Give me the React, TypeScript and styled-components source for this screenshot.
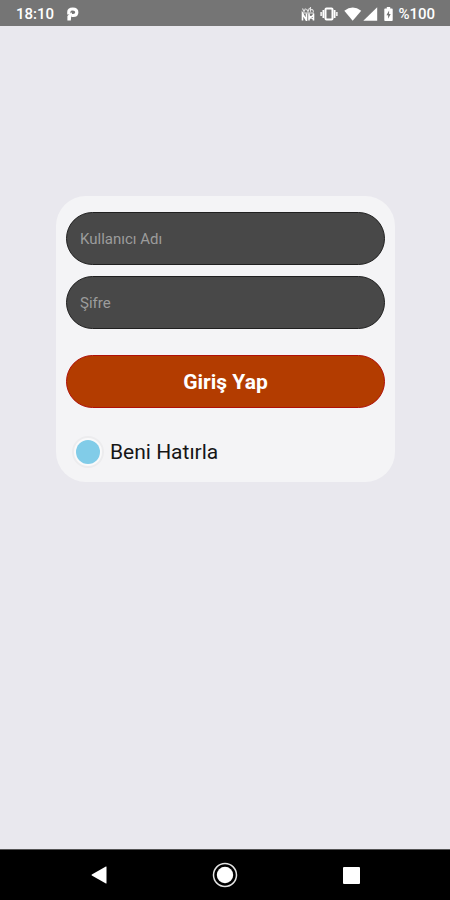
import React from "react";
import styled, { createGlobalStyle } from "styled-components";

const GlobalStyle = createGlobalStyle`
  *, *::before, *::after { box-sizing: border-box; }
  body {
    margin: 0;
    background: #e9e8ee;
    font-family: Roboto, "Liberation Sans", sans-serif;
  }
`;

const Screen = styled.div`
  display: flex;
  flex-direction: column;
  min-height: 100vh;
`;

const StatusBar = styled.header`
  display: flex;
  align-items: center;
  justify-content: space-between;
  height: 26px;
  padding: 2px 15px 0 16px;
  background: #757575;
  color: #fff;
  font-size: 15px;
  line-height: 20px;
  font-weight: 500;
`;

const StatusGroup = styled.div<{ $gap: number }>`
  display: flex;
  align-items: center;
  gap: ${(p) => p.$gap}px;
`;

const Icon = styled.svg`
  display: block;
  flex: none;
`;

const Content = styled.main`
  flex: 1;
  padding: 170px 55px 24px 56px;
`;

const Card = styled.form`
  display: flex;
  flex-direction: column;
  padding: 16px 10px 14px;
  border-radius: 30px;
  background: #f4f4f6;
`;

const Field = styled.input`
  width: 100%;
  height: 53px;
  margin-bottom: 11px;
  padding: 0 13px;
  border: 1px solid #202020;
  border-radius: 27px;
  background: #484848;
  color: #fff;
  font: 400 15px/20px Roboto, "Liberation Sans", sans-serif;
  outline: none;

  &::placeholder {
    color: #9c9c9c;
    opacity: 1;
  }
`;

const SubmitButton = styled.button`
  width: 100%;
  height: 53px;
  margin-top: 15px;
  padding: 0;
  border: 1px solid #b01008;
  border-radius: 27px;
  background: #b33c00;
  color: #fff;
  font: 700 21px/28px Roboto, "Liberation Sans", sans-serif;
  cursor: pointer;
`;

const Remember = styled.label`
  display: flex;
  align-items: center;
  align-self: flex-start;
  gap: 6px;
  margin-top: 28px;
  padding-left: 6px;
  color: #161616;
  font-size: 21px;
  line-height: 32px;
  cursor: pointer;
`;

const Check = styled.input`
  appearance: none;
  flex: none;
  display: grid;
  place-items: center;
  width: 32px;
  height: 32px;
  margin: 0;
  border: 2px solid #ececee;
  border-radius: 50%;
  background: #f9f9fa;

  &::before {
    content: "";
    width: 24px;
    height: 24px;
    border-radius: 50%;
    background: transparent;
  }

  &:checked::before {
    background: #81cce8;
  }
`;

const NavBar = styled.nav`
  display: grid;
  grid-template-columns: repeat(3, 1fr);
  height: 51px;
  padding: 0 8%;
  border-top: 1px solid #555;
  background: #000;
`;

const NavButton = styled.button`
  display: flex;
  align-items: center;
  justify-content: center;
  padding: 0;
  border: 0;
  background: none;
  cursor: pointer;
`;

export default function App() {
  return (
    <Screen>
      <GlobalStyle />
      <StatusBar>
        <StatusGroup $gap={13}>
          <span>18:10</span>
          <Icon width="12" height="14" viewBox="0 0 12 14" fill="none" aria-hidden="true">
            <path d="M1.8 7.5V5C1.8 3 3.4 2 5.8 2C8.3 2 9.8 3.3 9.8 5.2C9.8 7.3 8.3 8.5 6.2 8.5H4.4" stroke="#fff" strokeWidth="3.2" />
            <path d="M.4 9L4.4 5.2L5.4 7.5L4.2 9.6L3.8 13.4H.4Z" fill="#fff" />
          </Icon>
        </StatusGroup>
        <StatusGroup $gap={5}>
          <Icon width="14" height="14" viewBox="0 0 14 14" fill="none" stroke="#fff" aria-hidden="true">
            <path d="M1.5 1.5L3 4.5L4.5 1.5M5.5 2L7 4.5L8.5 1M9.5 0V4.8M9.5 3Q12 1.5 12.5 4.8" strokeWidth="1.1" opacity=".8" />
            <path d="M1.5 13.5V6.5L5.5 13.5V6.5M8 6.5V13.5M12.5 6.5V13.5M8 9L12.5 12M8 12L12.5 8" strokeWidth="1.6" />
            <path d="M1 6H13" strokeWidth="1.2" opacity=".7" />
          </Icon>
          <Icon width="19" height="14" viewBox="0 0 19 14" fill="none" stroke="#fff" aria-hidden="true">
            <rect x="5.5" y="1.5" width="7" height="11" rx="1" strokeWidth="2" />
            <path d="M3.4 3V11M14.6 3V11" strokeWidth="1.8" />
            <path d="M1.2 5V9M16.8 5V9" strokeWidth="1.8" opacity=".85" />
          </Icon>
          <Icon width="35" height="14" viewBox="0 0 35 14" fill="#fff" aria-hidden="true">
            <path d="M.3 3.8Q8.7 -2.6 17.2 3.8L8.7 13.8Z" />
            <path d="M33.2 .3V13.7H19.3Z" />
          </Icon>
          <Icon width="9" height="14" viewBox="0 0 9 14" aria-hidden="true">
            <path d="M2.8 0H6.2V1.5H7.9Q8.7 1.5 8.7 2.3V13.2Q8.7 14 7.9 14H1.1Q.3 14 .3 13.2V2.3Q.3 1.5 1.1 1.5H2.8Z" fill="#fff" />
            <path d="M5.1 3.6L2.4 8.3H4.1V11.8L6.7 7.1H5.1Z" fill="#757575" />
          </Icon>
          <span>%100</span>
        </StatusGroup>
      </StatusBar>
      <Content>
        <Card onSubmit={(e) => e.preventDefault()}>
          <Field type="text" aria-label="Kullanıcı Adı" placeholder="Kullanıcı Adı" />
          <Field type="password" aria-label="Şifre" placeholder="Şifre" />
          <SubmitButton type="submit">Giriş Yap</SubmitButton>
          <Remember htmlFor="remember">
            <Check id="remember" type="checkbox" defaultChecked />
            <span>Beni Hatırla</span>
          </Remember>
        </Card>
      </Content>
      <NavBar>
        <NavButton type="button" aria-label="Geri">
          <Icon width="16" height="18" viewBox="0 0 16 18" aria-hidden="true">
            <path d="M15.5 .8V17.2Q15.5 17.8 14.9 17.5L.8 9.5Q.2 9 .8 8.5L14.9 .5Q15.5 .2 15.5 .8Z" fill="#fff" />
          </Icon>
        </NavButton>
        <NavButton type="button" aria-label="Ana ekran">
          <Icon width="26" height="26" viewBox="0 0 26 26" aria-hidden="true">
            <circle cx="13" cy="13" r="11.5" fill="none" stroke="#e4e4e4" strokeWidth="1.5" />
            <circle cx="13" cy="13" r="8.2" fill="#fff" />
          </Icon>
        </NavButton>
        <NavButton type="button" aria-label="Son uygulamalar">
          <Icon width="17" height="17" viewBox="0 0 17 17" aria-hidden="true">
            <rect width="17" height="17" rx="1" fill="#fff" />
          </Icon>
        </NavButton>
      </NavBar>
    </Screen>
  );
}
